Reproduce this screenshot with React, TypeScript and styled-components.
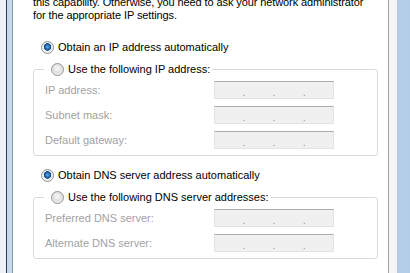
import styled, { createGlobalStyle } from 'styled-components';

const GlobalStyle = createGlobalStyle`
  html, body {
    margin: 0;
    padding: 0;
    background: #eef2f7;
    overflow: hidden;
  }
  body {
    font-family: 'Liberation Sans', Arial, sans-serif;
    font-size: 11px;
    color: #000;
  }
`;

type RadioProps = {
  label: string;
  checked?: boolean;
};

const Radio = (props: RadioProps) => (
  <RadioRow>
    <RadioDot $checked={props.checked || false} />
    <span>{props.label}</span>
  </RadioRow>
);

const AddressBox = () => (
  <Address>
    <i />
    <b>.</b>
    <i />
    <b>.</b>
    <i />
    <b>.</b>
    <i />
  </Address>
);

type GroupProps = {
  title: string;
  fields: string[];
};

const Group = (props: GroupProps) => (
  <GroupBox>
    <legend>
      <Radio label={props.title} />
    </legend>
    <Fields>
      {props.fields.map((f) => (
        <FieldRow key={f}>
          <span className='label'>{f}</span>
          <AddressBox />
        </FieldRow>
      ))}
    </Fields>
  </GroupBox>
);

const App = () => {
  return (
    <>
      <GlobalStyle />
      <Frame>
        <Dialog>
          <Content>
            <Intro>
              this capability. Otherwise, you need to ask your network administrator
              <br />
              for the appropriate IP settings.
            </Intro>
            <Section $top={18}>
              <Radio label='Obtain an IP address automatically' checked />
              <Group
                title='Use the following IP address:'
                fields={['IP address:', 'Subnet mask:', 'Default gateway:']}
              />
            </Section>
            <Section $top={12}>
              <Radio label='Obtain DNS server address automatically' checked />
              <Group
                title='Use the following DNS server addresses:'
                fields={['Preferred DNS server:', 'Alternate DNS server:']}
              />
            </Section>
          </Content>
          <Strip />
        </Dialog>
      </Frame>
    </>
  );
};

export default App;

const Frame = styled.div`
  margin-left: 6px;
  width: 396px;
  height: 273px;
  border-left: 1px solid #2b3e52;
  border-right: 1px solid #1d3550;
  background: linear-gradient(to right, #c4d8ee, #b3cde9);
  padding: 0 6px 0 5px;
  box-sizing: content-box;
  display: flex;
`;

const Dialog = styled.div`
  width: 385px;
  height: 100%;
  box-sizing: border-box;
  border-left: 1px solid #8d99a6;
  background: #f7f5f7;
  display: flex;
`;

const Content = styled.div`
  width: 376px;
  height: 100%;
  box-sizing: border-box;
  background: #ffffff;
  border-right: 1px solid #a3a3a3;
  padding: 0 4px 0 20px;
  display: flex;
  flex-direction: column;
`;

const Strip = styled.div`
  flex: 1;
`;

const Intro = styled.p`
  margin: -4px 0 0 0;
  line-height: 13px;
  white-space: nowrap;
  letter-spacing: -0.1px;
`;

const Section = styled.div<{ $top: number }>`
  display: flex;
  flex-direction: column;
  margin-top: ${(p) => p.$top}px;
`;

const RadioRow = styled.label`
  display: flex;
  align-items: center;
  gap: 4px;
  height: 14px;
  padding-left: 8px;
  white-space: nowrap;
`;

const RadioDot = styled.span<{ $checked: boolean }>`
  width: 13px;
  height: 13px;
  box-sizing: border-box;
  border-radius: 50%;
  border: 1px solid #8f9397;
  flex: none;
  background: ${(p) =>
    p.$checked
      ? 'radial-gradient(circle at 50% 45%, #6fb2ea 0, #2470b8 2px, #1a4a80 3.5px, #e6e8ea 4px, #f5f5f5 6px)'
      : 'radial-gradient(circle at 50% 40%, #f8f8f8 0, #dedede 5px, #f2f2f2 6px)'};
`;

const GroupBox = styled.fieldset`
  margin: 8px 0 0 0;
  padding: 5px 0 6px 11px;
  width: 345px;
  box-sizing: border-box;
  border: 1px solid #d5dadf;
  border-radius: 3px;

  legend {
    padding: 0 2px 0 0;
    margin-left: -1px;
    line-height: 14px;

    label {
      padding-left: 7px;
    }
  }
`;

const Fields = styled.div`
  display: flex;
  flex-direction: column;
  gap: 7px;
`;

const FieldRow = styled.div`
  display: flex;
  align-items: center;

  .label {
    width: 169px;
    color: #a2a2a2;
  }
`;

const Address = styled.div`
  width: 120px;
  height: 18px;
  box-sizing: border-box;
  background: #f0f0f0;
  border: 1px solid #e0e3e7;
  border-top-color: #acadb1;
  display: flex;
  align-items: center;

  i {
    flex: 1;
  }

  b {
    font-weight: normal;
    color: #9a9a9a;
    line-height: 18px;
    padding-top: 3px;
  }
`;
